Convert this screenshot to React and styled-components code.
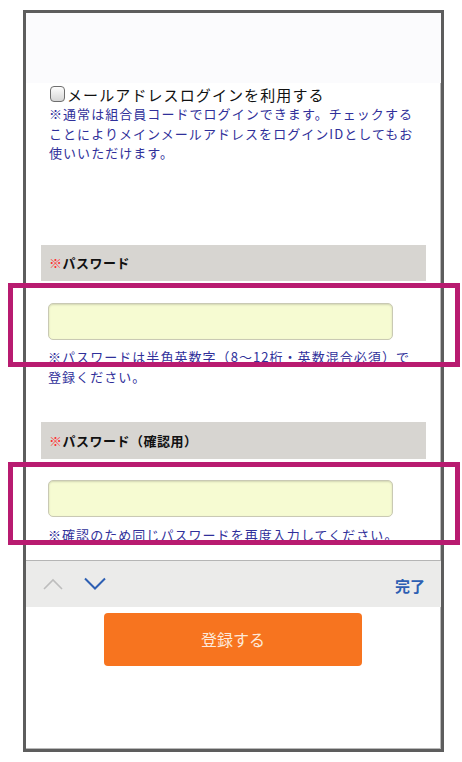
import React from 'react'
import styled, {createGlobalStyle} from 'styled-components'

const Global = createGlobalStyle`
  html, body {
    margin: 0;
    padding: 0;
    background: #fff;
  }
  body {
    font-family: "Noto Sans CJK JP", "Noto Sans", sans-serif;
  }
`

const Frame = styled.div`
  box-sizing: border-box;
  width: 421px;
  height: 742px;
  margin: 10px 0 0 23px;
  border: 3px solid #5d5d5d;
  box-shadow: inset -1px -1px 0 #b9b9b9;
  background: #fff;
  display: flex;
  flex-direction: column;
`

const TopBand = styled.div`
  height: 70px;
  background: #fbfbfd;
`

const CheckRow = styled.label`
  display: flex;
  align-items: center;
  height: 20px;
  margin-top: 1px;
  padding-left: 24px;
  font-size: 15px;
  letter-spacing: 1.1px;
  color: #111;
`

const Box = styled.span`
  box-sizing: border-box;
  width: 15px;
  height: 16px;
  margin-right: 2px;
  border: 1px solid #6e6e6e;
  border-radius: 4px;
  background: linear-gradient(#fdfdfd, #d6d6d6);
`

const Note = styled.p`
  margin: ${p => p.$top}px 0 0 ${p => p.$left}px;
  font-size: 13px;
  line-height: ${p => p.$lh || 20}px;
  letter-spacing: 1.05px;
  color: #30309a;
  white-space: nowrap;
`

const Header = styled.div`
  display: flex;
  align-items: center;
  height: ${p => p.$h}px;
  margin: ${p => p.$top}px 15px 0;
  padding-left: 8px;
  background: #d7d5d1;
  font-size: 13px;
  font-weight: 700;
  letter-spacing: 0.5px;
  color: #111;
`

const Mark = styled.span`
  color: #ff3030;
  font-weight: 400;
`

const Field = styled.div`
  position: relative;
  padding-top: ${p => p.$pad}px;
`

const Input = styled.input`
  display: block;
  box-sizing: border-box;
  width: 345px;
  height: 37px;
  margin-left: 22px;
  border: 1px solid #c9c9b4;
  border-radius: 5px;
  background: #f6fbd2;
  box-shadow: inset 0 1px 2px rgba(0, 0, 0, 0.15);
  outline: none;
`

const Highlight = styled.div`
  position: absolute;
  left: -18px;
  top: ${p => p.$top}px;
  width: 452px;
  height: ${p => p.$h}px;
  box-sizing: border-box;
  border: 5px solid #b81b70;
  z-index: 2;
  pointer-events: none;
`

const Toolbar = styled.div`
  display: flex;
  align-items: center;
  height: 46px;
  margin-top: 15px;
  padding: 0 16px 0 17px;
  border-top: 1px solid #b5b5b5;
  background: #ebebea;
  svg {
    display: block;
  }
`

const Done = styled.span`
  margin-left: auto;
  margin-top: 3px;
  font-size: 15px;
  font-weight: 700;
  color: #2d5fb3;
`

const Submit = styled.button`
  width: 258px;
  height: 53px;
  margin: 6px 0 0 78px;
  border: none;
  border-radius: 4px;
  background: #f7741f;
  color: #fde9da;
  font-family: "Noto Sans CJK JP", sans-serif;
  font-size: 16px;
  letter-spacing: 0;
`

export default function App() {
  return (
    <>
      <Global />
      <Frame>
        <TopBand />
        <CheckRow>
          <Box />
          メールアドレスログインを利用する
        </CheckRow>
        <Note $top={0} $left={23} $lh={19.5}>
          ※通常は組合員コードでログインできます。チェックする<br />
          ことによりメインメールアドレスをログインIDとしてもお<br />
          使いいただけます。
        </Note>

        <Header $top={82} $h={36}>
          <Mark>※</Mark>パスワード
        </Header>
        <Field $pad={22}>
          <Input type='password' />
          <Note $top={7} $left={22}>
            ※パスワードは半角英数字（8〜12桁・英数混合必須）で<br />
            登録ください。
          </Note>
          <Highlight $top={2} $h={84} />
        </Field>

        <Header $top={35} $h={37}>
          <Mark>※</Mark>パスワード（確認用）
        </Header>
        <Field $pad={21}>
          <Input type='password' />
          <Note $top={8} $left={22}>
            ※確認のため同じパスワードを再度入力してください。
          </Note>
          <Highlight $top={3} $h={83} />
        </Field>

        <Toolbar>
          <svg width='20' height='12' viewBox='0 0 20 12'>
            <polyline points='1,11 10,2 19,11' fill='none' stroke='#bdbdbd' strokeWidth='1.6' />
          </svg>
          <svg width='22' height='13' viewBox='0 0 22 13' style={{marginLeft: 21}}>
            <polyline points='1,1.5 11,11.5 21,1.5' fill='none' stroke='#2d5fb3' strokeWidth='2' />
          </svg>
          <Done>完了</Done>
        </Toolbar>

        <Submit>登録する</Submit>
      </Frame>
    </>
  )
}
